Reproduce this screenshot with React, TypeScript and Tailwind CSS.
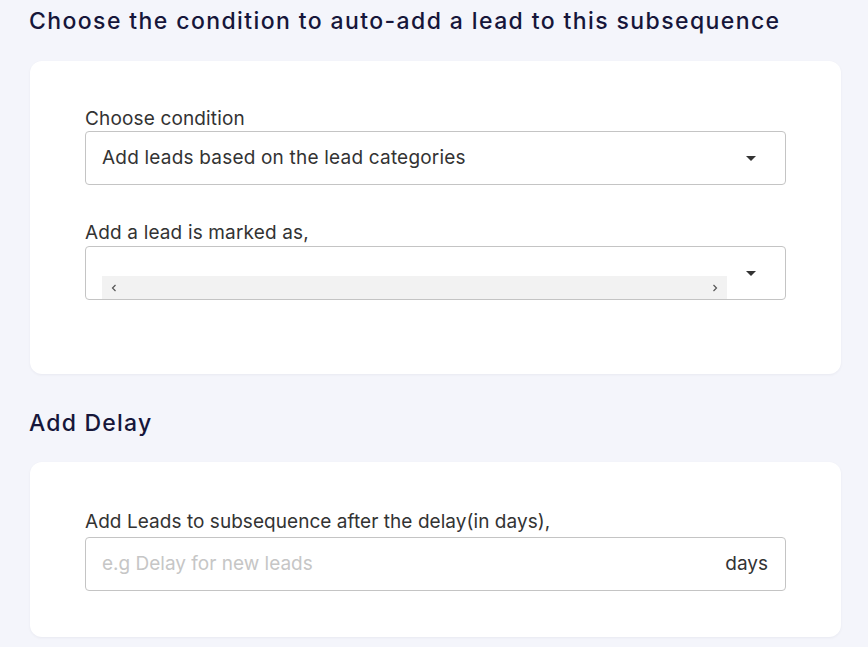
import React from "react";

function Caret() {
  return (
    <svg width="24" height="24" viewBox="0 0 24 24" className="shrink-0">
      <path d="M7 10l5 5 5-5z" fill="#333" />
    </svg>
  );
}

export default function App() {
  return (
    <div
      className="min-h-[647px] w-full bg-[#f4f5fb] pl-[29px] pr-[27px] pt-[4px] text-[#222]"
      style={{ fontFamily: "Inter, 'Noto Sans', sans-serif" }}
    >
      <h1 className="h-[34px] text-[23px] font-medium leading-[34px] text-[#16163a] tracking-[1.4px] whitespace-nowrap">
        Choose the condition to auto-add a lead to this subsequence
      </h1>
      <div className="mt-[23px] ml-[1px] rounded-[12px] bg-white pl-[55px] pr-[55px] pt-[46px] pb-[74px] shadow-[0_1px_3px_rgba(20,20,60,0.05)]">
        <div className="text-[19px] leading-[24px] tracking-[0.15px] text-[#333]">Choose condition</div>
        <div className="flex h-[54px] items-center justify-between rounded-[4px] border border-[#c4c4c4] pl-[16px] pr-[22px]">
          <span className="text-[19px] tracking-[0.2px] text-[#333]">Add leads based on the lead categories</span>
          <Caret />
        </div>
        <div className="mt-[36px] text-[19px] leading-[24px] tracking-[0.15px] text-[#333]">Add a lead is marked as,</div>
        <div className="relative mt-[1px] flex h-[54px] items-center justify-end rounded-[4px] border border-[#c4c4c4] pr-[22px]">
          <Caret />
          <div className="absolute left-[16px] bottom-0 flex h-[23px] w-[625px] items-center justify-between bg-[#f2f2f2] px-[9px]">
            <svg width="6" height="8" viewBox="0 0 6 8"><path d="M4.5 1 L1.5 4 L4.5 7" stroke="#555" strokeWidth="1.2" fill="none" /></svg>
            <svg width="6" height="8" viewBox="0 0 6 8"><path d="M1.5 1 L4.5 4 L1.5 7" stroke="#555" strokeWidth="1.2" fill="none" /></svg>
          </div>
        </div>
      </div>
      <h2 className="mt-[30px] h-[38px] text-[23px] font-medium leading-[38px] tracking-[1.2px] text-[#16163a]">Add Delay</h2>
      <div className="mt-[20px] ml-[1px] rounded-[12px] bg-white pl-[55px] pr-[55px] pt-[48px] pb-[46px] shadow-[0_1px_3px_rgba(20,20,60,0.05)]">
        <div className="text-[19px] leading-[24px] tracking-[0.05px] text-[#333]">Add Leads to subsequence after the delay(in days),</div>
        <div className="mt-[3px] flex h-[54px] items-center justify-between rounded-[4px] border border-[#c4c4c4] pl-[16px] pr-[17px]">
          <span className="text-[19px] text-[#c6c6c6]">e.g Delay for new leads</span>
          <span className="text-[19px] text-[#333]">days</span>
        </div>
      </div>
    </div>
  );
}
